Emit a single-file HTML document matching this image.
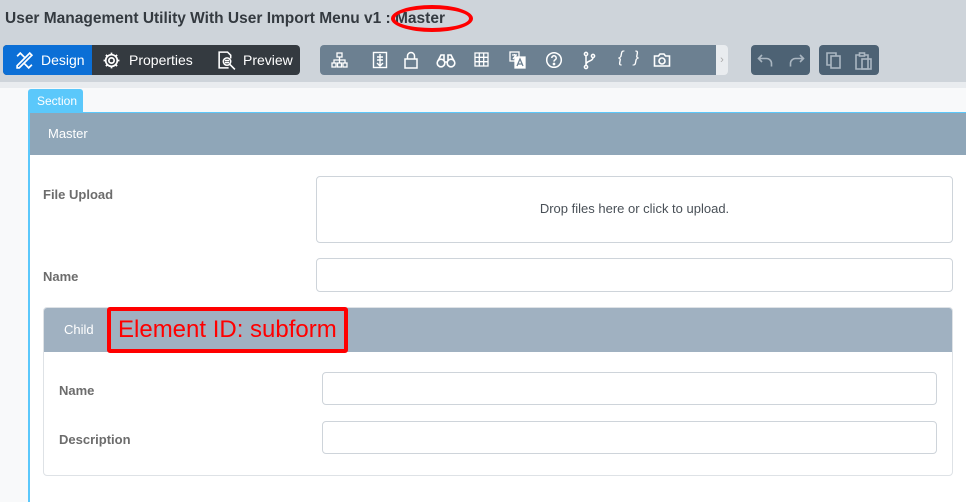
<!DOCTYPE html>
<html><head><meta charset="utf-8"><style>
*{box-sizing:border-box;margin:0;padding:0}
body{width:966px;height:494px;overflow:hidden;background:#f8f9fa;font-family:"Liberation Sans",sans-serif;position:relative}
.a{position:absolute}
.top{left:0;top:0;width:966px;height:82px;background:#ced4da}
.title{left:5px;top:10px;font-size:15.5px;font-weight:bold;color:#343a40}
.tabs{left:3px;top:45px;width:297px;height:30px;background:#343a40;border-radius:4px}
.tab{top:0;height:30px;color:#fff;font-size:14px;line-height:30px}
.tb{left:320px;top:45px;width:403px;height:30px;background:#6c8091;border-radius:4px}
.tbe{left:716px;top:45px;width:12px;height:30px;background:#e9ecef;border-radius:0 4px 4px 0;color:#aaa;font-size:11px;line-height:30px;text-align:center}
.g2{top:45px;height:30px;background:#4d6274;border-radius:4px}
.lbl{font-size:13px;font-weight:bold;color:#6c6c6c}
.inp{background:#fff;border:1px solid #ced4da;border-radius:4px}
svg.i{position:absolute;top:51px}
</style></head><body>
<div class="a top"></div>
<div class="a" style="left:0;top:82px;width:966px;height:6px;background:#e9ecef"></div>
<div class="a title">User Management Utility With User Import Menu v1 : Master</div>
<div class="a" style="left:391px;top:5px;width:82px;height:27px;border:4px solid #f00;border-radius:50%"></div>
<div class="a tabs">
 <div class="a tab" style="left:0;width:89px;background:#0b6fd6;border-radius:4px 0 0 4px;padding-left:38px">Design</div>
 <svg class="a" style="left:12px;top:6px" width="19" height="19" viewBox="0 0 18 18" fill="none" stroke="#fff" stroke-width="1.6"><path d="M2 14L14 2l2 2L4 16H2z"/><path d="M2 5l3-3 4 4M9 12l4 4 3-3"/></svg>
 <svg class="a" style="left:99px;top:6px" width="19" height="19" viewBox="0 0 18 18" fill="none" stroke="#fff" stroke-width="1.6"><circle cx="9" cy="9" r="2.5"/><circle cx="9" cy="9" r="5.5"/><path d="M9 1.5v2M9 14.5v2M1.5 9h2M14.5 9h2M3.7 3.7l1.5 1.5M12.8 12.8l1.5 1.5M3.7 14.3l1.5-1.5M12.8 5.2l1.5-1.5"/></svg>
 <div class="a tab" style="left:126px">Properties</div>
 <svg class="a" style="left:213px;top:5px" width="21" height="21" viewBox="0 0 20 20" fill="none" stroke="#fff" stroke-width="1.5"><path d="M12 17H3V2h8l3 3v3"/><circle cx="10.5" cy="11" r="3.5"/><path d="M13 13.5l5 5M8.5 10h4M8.5 12h4"/></svg>
 <div class="a tab" style="left:240px">Preview</div>
</div>
<div class="a tb"></div>
<div class="a tbe">›</div>
<!-- toolbar icons -->
<svg class="i" style="left:331px" width="17" height="18" viewBox="0 0 17 18" fill="none" stroke="#fff" stroke-width="1.3"><rect x="6" y="2" width="5" height="4"/><rect x="1" y="12" width="4" height="4"/><rect x="6.5" y="12" width="4" height="4"/><rect x="12" y="12" width="4" height="4"/><path d="M8.5 6v6M3 12V9h11v3"/></svg>
<svg class="i" style="left:372px" width="16" height="18" viewBox="0 0 16 18" fill="none" stroke="#fff" stroke-width="1.4"><rect x="1.5" y="1.5" width="13" height="15"/><path d="M8 3v12M5 6h6M5 9h6M5 12l3 3 3-3"/></svg>
<svg class="i" style="left:403px" width="16" height="18" viewBox="0 0 16 18" fill="none" stroke="#fff" stroke-width="1.5"><rect x="2" y="8" width="12" height="9"/><path d="M4.5 8V5a3.5 3.5 0 0 1 7 0v3"/></svg>
<svg class="i" style="left:436px" width="20" height="18" viewBox="0 0 20 18" fill="none" stroke="#fff" stroke-width="1.6"><circle cx="5" cy="12" r="3.8"/><circle cx="15" cy="12" r="3.8"/><path d="M8.5 11h3M2 10l3-6h3v6M18 10l-3-6h-3v6"/></svg>
<svg class="i" style="left:474px" width="15" height="18" viewBox="0 0 15 18" fill="none" stroke="#fff" stroke-width="1.3"><rect x="1" y="2" width="13" height="13"/><path d="M5.3 2v13M9.7 2v13M1 6.3h13M1 10.7h13"/></svg>
<svg class="i" style="left:509px" width="17" height="18" viewBox="0 0 17 18" fill="none" stroke="#fff" stroke-width="1.3"><rect x="1" y="1" width="9" height="9"/><path d="M6 6h10v11H6z" fill="#fff"/><path d="M8 15l3-7 3 7M9 13h4" stroke="#6c8091"/><path d="M3 4h5M5.5 3v1M4 8l3-4"/></svg>
<svg class="i" style="left:545px" width="18" height="18" viewBox="0 0 18 18" fill="none" stroke="#fff" stroke-width="1.5"><circle cx="9" cy="9" r="7.3"/><path d="M6.8 7a2.2 2.2 0 1 1 3 2c-.6.3-.8.8-.8 1.6"/><circle cx="9" cy="13" r=".6" fill="#fff"/></svg>
<svg class="i" style="left:583px" width="13" height="19" viewBox="0 0 13 19" fill="none" stroke="#fff" stroke-width="1.5"><circle cx="3" cy="3" r="1.6"/><circle cx="3" cy="16" r="1.6"/><circle cx="10" cy="5" r="1.6"/><path d="M3 4.6v9.8M10 6.6c0 4-7 3-7 7"/></svg>
<div class="a" style="left:618px;top:49px;color:#fff;font-size:16px;font-style:italic;letter-spacing:3px">{ }</div>
<svg class="i" style="left:653px" width="18" height="18" viewBox="0 0 18 18" fill="none" stroke="#fff" stroke-width="1.6"><path d="M1.5 5h4l1.5-2h4l1.5 2h4v10h-15z"/><circle cx="9" cy="10" r="3"/></svg>
<div class="a g2" style="left:751px;width:59px"></div>
<svg class="i" style="left:757px" width="48" height="18" viewBox="0 0 48 18" fill="none" stroke="#aab6c1" stroke-width="1.6"><path d="M5 4L1.5 7.5 5 11M1.5 7.5h8a5 5 0 0 1 5 5v3"/><path d="M43 4l3.5 3.5L43 11M46.5 7.5h-8a5 5 0 0 0-5 5v3"/></svg>
<div class="a g2" style="left:819px;width:60px"></div>
<svg class="i" style="left:825px" width="50" height="19" viewBox="0 0 50 19" fill="none" stroke="#aab6c1" stroke-width="1.6"><path d="M6 14H2V2h9v3"/><rect x="6" y="5" width="9" height="12"/><path d="M34 4h-3v14h12V4h-3"/><rect x="34.5" y="2" width="5" height="3"/><rect x="37" y="8" width="9" height="10"/></svg>
<div class="a" style="left:28px;top:89px;width:55px;height:24px;background:#5bc8fb;border-radius:3px 3px 0 0;color:#fff;font-size:12px;line-height:25px;padding-left:9px">Section</div>
<div class="a" style="left:28px;top:112px;width:940px;height:390px;background:#fff;border-left:2px solid #5bc8fb;border-top:1px solid #5bc8fb"></div>
<div class="a" style="left:30px;top:113px;width:936px;height:42px;background:#8fa6b8;color:#fff;font-size:13px;line-height:42px;padding-left:18px">Master</div>
<div class="a lbl" style="left:43px;top:187px">File Upload</div>
<div class="a inp" style="left:316px;top:176px;width:637px;height:67px;font-size:13px;color:#495057;text-align:center;line-height:64px">Drop files here or click to upload.</div>
<div class="a lbl" style="left:43px;top:269px">Name</div>
<div class="a inp" style="left:316px;top:258px;width:637px;height:34px"></div>
<div class="a" style="left:43px;top:307px;width:910px;height:169px;border:1px solid #dee2e6;border-radius:4px"></div>
<div class="a" style="left:44px;top:308px;width:908px;height:44px;background:#a0b1c1;color:#fff;font-size:13px;line-height:44px;padding-left:20px;border-radius:3px 3px 0 0">Child</div>
<div class="a" style="left:107px;top:307px;width:241px;height:46px;border:4px solid #f00;border-radius:3px;color:#f00;font-size:24px;line-height:38px;padding-left:7px">Element ID: subform</div>
<div class="a lbl" style="left:59px;top:383px">Name</div>
<div class="a inp" style="left:322px;top:372px;width:615px;height:33px"></div>
<div class="a lbl" style="left:59px;top:432px">Description</div>
<div class="a inp" style="left:322px;top:421px;width:615px;height:33px"></div>
</body></html>
